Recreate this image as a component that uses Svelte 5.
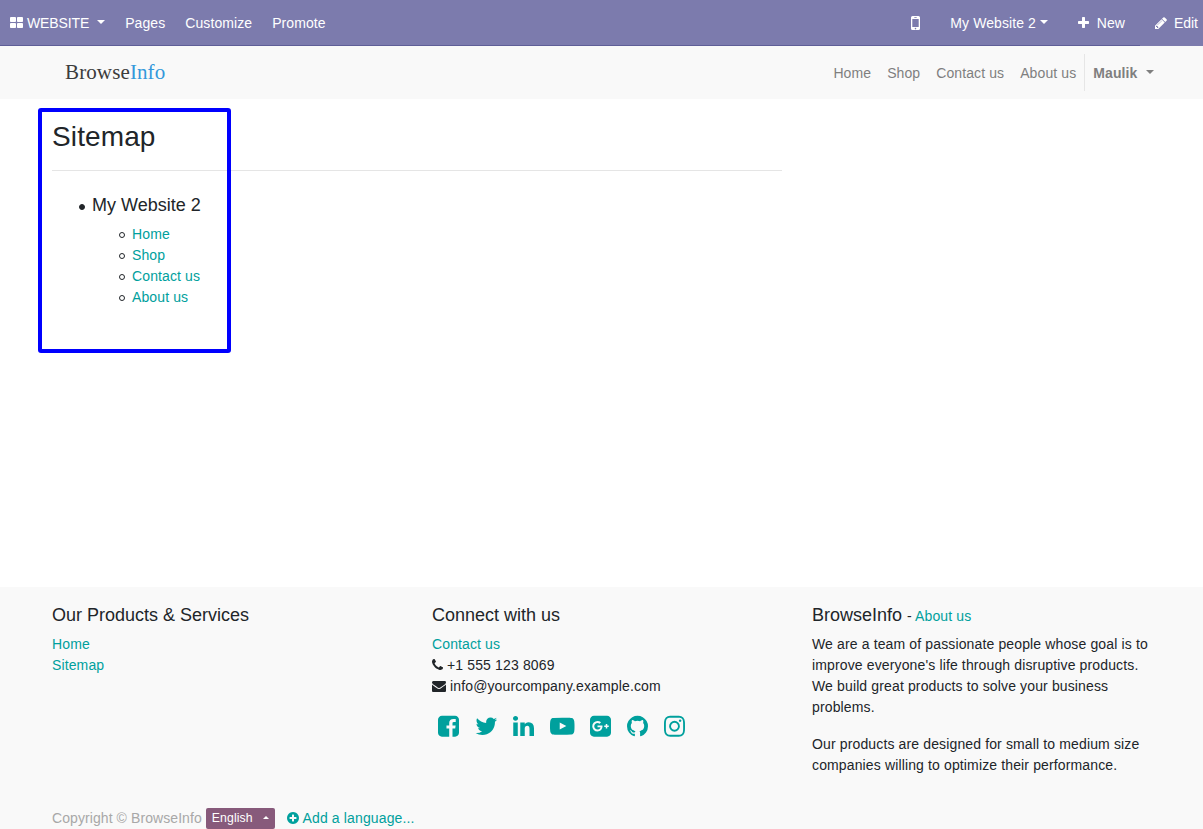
<script>
  const icons = {
    thLarge: { x: 64, w: 1664, d: 'M832 1024v384q0 52-38 90t-90 38h-512q-52 0-90-38t-38-90v-384q0-52 38-90t90-38h512q52 0 90 38t38 90zm0-768v384q0 52-38 90t-90 38h-512q-52 0-90-38t-38-90v-384q0-52 38-90t90-38h512q52 0 90 38t38 90zm896 768v384q0 52-38 90t-90 38h-512q-52 0-90-38t-38-90v-384q0-52 38-90t90-38h512q52 0 90 38t38 90zm0-768v384q0 52-38 90t-90 38h-512q-52 0-90-38t-38-90v-384q0-52 38-90t90-38h512q52 0 90 38t38 90z' },
    plus: { x: 192, w: 1408, d: 'M1600 736v192q0 40-28 68t-68 28h-416v416q0 40-28 68t-68 28h-192q-40 0-68-28t-28-68v-416h-416q-40 0-68-28t-28-68v-192q0-40 28-68t68-28h416v-416q0-40 28-68t68-28h192q40 0 68 28t28 68v416h416q40 0 68 28t28 68z' },
    pencil: { x: 128, w: 1536, d: 'M491 1536l91-91-235-235-91 91v107h128v128h107zm523-928q0-22-22-22-10 0-17 7l-542 542q-7 7-7 17 0 22 22 22 10 0 17-7l542-542q7-7 7-17zm-54-192l416 416-832 832h-416v-416zm683 96q0 53-37 90l-166 166-416-416 166-165q36-38 90-38 53 0 91 38l235 234q37 39 37 91z' },
    phone: { x: 192, w: 1408, d: 'M1600 1240q0 27-10 70.5t-21 68.5q-21 50-122 106-94 51-186 51-27 0-53-3.5t-57.5-12.5-47-14.5-55.5-20.5-49-18q-98-35-175-83-127-79-264-216t-216-264q-48-77-83-175-3-9-18-49t-20.5-55.5-14.5-47-12.5-57.5-3.5-53q0-92 51-186 56-101 106-122 25-11 68.5-21t70.5-10q14 0 21 3 18 6 53 76 11 19 30 54t35 63.5 31 53.5q3 4 17.5 25t21.5 35.5 7 28.5q0 20-28.5 50t-62 55-62 53-28.5 46q0 9 5 22.5t8.5 20.5 14 24 11.5 19q76 137 174 235t235 174q2 1 19 11.5t24 14 20.5 8.5 22.5 5q18 0 46-28.5t53-62 55-62 50-28.5q14 0 28.5 7t35.5 21.5 25 17.5q25 15 53.5 31t63.5 35 54 30q70 35 76 53 3 7 3 21z' },
    envelope: { x: 0, w: 1792, d: 'M1792 710v794q0 66-47 113t-113 47h-1472q-66 0-113-47t-47-113v-794q44 49 101 87 362 246 497 345 57 42 92.5 65.5t94.5 48 110 24.5h2q51 0 110-24.5t94.5-48 92.5-65.5q170-123 498-345 57-39 100-87zm0-294q0 79-49 151t-122 123q-376 261-468 325-10 7-42.5 31t-54 38.5-52 32.5-57.5 27-50 9h-2q-23 0-50-9t-57.5-27-52-32.5-54-38.5-42.5-31q-91-64-262-182.5t-205-142.5q-62-42-117-115.5t-55-136.5q0-78 41.5-130t118.5-52h1472q65 0 112.5 47t47.5 113z' },
    plusCircle: { x: 128, w: 1536, d: 'M1344 960v-128q0-26-19-45t-45-19h-256v-256q0-26-19-45t-45-19h-128q-26 0-45 19t-19 45v256h-256q-26 0-45 19t-19 45v128q0 26 19 45t45 19h256v256q0 26 19 45t45 19h128q26 0 45-19t19-45v-256h256q26 0 45-19t19-45zm320-64q0 209-103 385.5t-279.5 279.5-385.5 103-385.5-103-279.5-279.5-103-385.5 103-385.5 279.5-279.5 385.5-103 385.5 103 279.5 279.5 103 385.5z' },
    facebook: { x: 128, w: 1536, d: 'M1376 128q119 0 203.5 84.5t84.5 203.5v960q0 119-84.5 203.5t-203.5 84.5h-188v-595h199l30-232h-229v-148q0-56 23.5-84t91.5-28l122-1v-207q-63-9-178-9-136 0-217.5 80t-81.5 226v171h-200v232h200v595h-532q-119 0-203.5-84.5t-84.5-203.5v-960q0-119 84.5-203.5t203.5-84.5h960z' },
    twitter: { x: 64, w: 1664, d: 'M1684 408q-67 98-162 167 1 14 1 42 0 130-38 259.5t-115.5 248.5-184.5 210.5-258 146-323 54.5q-271 0-496-145 35 4 78 4 225 0 401-138-105-2-188-64.5t-114-159.5q33 5 61 5 43 0 85-11-112-23-185.5-111.5t-73.5-205.5v-4q68 38 146 41-66-44-105-115t-39-154q0-88 44-163 121 149 294.5 238.5t371.5 99.5q-8-38-8-74 0-134 94.5-228.5t228.5-94.5q140 0 236 102 109-21 205-78-37 115-142 178 93-10 186-50z' },
    linkedin: { x: 128, w: 1536, d: 'M477 625v991h-330v-991h330zm21-306q1 73-50.5 122t-135.5 49h-2q-82 0-132-49t-50-122q0-74 51.5-122.5t134.5-48.5 133 48.5 51 122.5zm1166 729v568h-329v-530q0-105-40.5-164.5t-126.5-59.5q-63 0-105.5 34.5t-63.5 85.5q-11 30-11 81v553h-329q2-399 2-647t-1-296l-1-48h329v144h-2q20-32 41-56t56.5-52 87-43.5 114.5-15.5q171 0 275 113.5t104 332.5z' },
    youtube: { x: 0, w: 1792, d: 'M711 1128l484-250-484-253v503zm185-862q168 0 324.5 4.5t229.5 9.5l73 4q1 0 17 1.5t23 3 23.5 4.5 28.5 8 28 13 31 19.5 29 26.5q6 6 15.5 18.5t29 58.5 26.5 101q8 64 12.5 136.5t5.5 113.5v176q1 145-18 290-7 55-25 99.5t-32 61.5l-14 17q-14 15-29 26.5t-31 19-28 12.5-28.5 8-24 4.5-23 3-16.5 1.5q-251 19-627 19-207-2-359.5-6.5t-200.5-7.5l-49-4-36-4q-36-5-54.5-10t-51-21-56.5-41q-6-6-15.5-18.5t-29-58.5-26.5-101q-8-64-12.5-136.5t-5.5-113.5v-176q-1-145 18-290 7-55 25-99.5t32-61.5l14-17q14-15 29-26.5t31-19.5 28-13 28.5-8 23.5-4.5 23-3 17-1.5q251-18 627-18z' },
    googlePlus: { x: 128, w: 1536, d: 'M1045 905q0-26-6-64h-362v132h217q-3 24-16.5 50t-37.5 53-66.5 44.5-96.5 17.5q-99 0-169-71t-70-171 70-171 169-71q92 0 153 59l104-101q-108-100-257-100-160 0-272 112.5t-112 271.5 112 271.5 272 112.5q165 0 266.5-105t101.5-270zm345 46h109v-110h-109v-110h-110v110h-110v110h110v110h110v-110zm274-535v960q0 119-84.5 203.5t-203.5 84.5h-960q-119 0-203.5-84.5t-84.5-203.5v-960q0-119 84.5-203.5t203.5-84.5h960q119 0 203.5 84.5t84.5 203.5z' },
    github: { x: 128, w: 1536, d: 'M896 128q209 0 385.5 103t279.5 279.5 103 385.5q0 251-146.5 451.5t-378.5 277.5q-27 5-40-7t-13-30q0-3 .5-76.5t.5-134.5q0-97-52-142 57-6 102.5-18t94-39 81-66.5 53-105 20.5-150.5q0-119-79-206 37-91-8-204-28-9-81 11t-92 44l-38 24q-93-26-192-26t-192 26q-16-11-42.5-27t-83.5-38.5-85-13.5q-45 113-8 204-79 87-79 206 0 85 20.5 150t52.5 105 80.5 67 94 39 102.5 18q-39 36-49 103-21 10-45 15t-57 5-65.5-21.5-55.5-62.5q-19-32-48.5-52t-49.5-24l-20-3q-21 0-29 4.5t-5 11.5 9 14 13 12l7 5q22 10 43.5 38t31.5 51l10 23q13 38 44 61.5t67 30 69.5 7 55.5-3.5l23-4q0 38 .5 88.5t.5 54.5q0 18-13 30t-40 7q-232-77-378.5-277.5t-146.5-451.5q0-209 103-385.5t279.5-279.5 385.5-103z' },
    instagram: { x: 128, w: 1536, d: 'M1152 896q0-106-75-181t-181-75-181 75-75 181 75 181 181 75 181-75 75-181zm138 0q0 164-115 279t-279 115-279-115-115-279 115-279 279-115 279 115 115 279zm108-410q0 38-27 65t-65 27-65-27-27-65 27-65 65-27 65 27 27 65zm-502-220q-7 0-76.5-.5t-105.5 0-96.5 3-103 10-71.5 18.5q-50 20-88 58t-58 88q-11 29-18.5 71.5t-10 103-3 96.5 0 105.5.5 76.5-.5 76.5 0 105.5 3 96.5 10 103 18.5 71.5q20 50 58 88t88 58q29 11 71.5 18.5t103 10 96.5 3 105.5 0 76.5-.5 76.5.5 105.5 0 96.5-3 103-10 71.5-18.5q50-20 88-58t58-88q11-29 18.5-71.5t10-103 3-96.5 0-105.5-.5-76.5.5-76.5 0-105.5-3-96.5-10-103-18.5-71.5q-20-50-58-88t-88-58q-29-11-71.5-18.5t-103-10-96.5-3-105.5 0-76.5.5zm768 630q0 229-5 317-10 208-124 322t-322 124q-88 5-317 5t-317-5q-208-10-322-124t-124-322q-5-88-5-317t5-317q10-208 124-322t322-124q88-5 317-5t317 5q208 10 322 124t124 322q5 88 5 317z' }
  };
  const pages = ['Home', 'Shop', 'Contact us', 'About us'];
  const social = ['facebook', 'twitter', 'linkedin', 'youtube', 'googlePlus', 'github', 'instagram'];
</script>

{#snippet icon(name, size = 14)}
  <svg class="icon" viewBox="{icons[name].x} 0 {icons[name].w} 1792" width={(icons[name].w / 1792) * size} height={size} aria-hidden="true"><path d={icons[name].d} /></svg>
{/snippet}

<div class="page">
  <nav class="topbar">
    <div class="tools">
      <a href="#top" class="brand">{@render icon('thLarge')}<span>WEBSITE</span><i class="caret"></i></a>
      <a href="#top">Pages</a>
      <a href="#top">Customize</a>
      <a href="#top">Promote</a>
    </div>
    <div class="actions">
      <a href="#top" class="mobile" aria-label="Mobile preview">
        <svg class="icon" viewBox="0 0 9 14" width="9" height="14" aria-hidden="true">
          <path fill-rule="evenodd" d="M1.5 0h6A1.5 1.5 0 0 1 9 1.5v11A1.5 1.5 0 0 1 7.500 14h-6A1.500 1.500 0 0 1 0 12.500v-11A1.500 1.500 0 0 1 1.500 0zM1.300 3v8h6.400V3zM3.300 1.300v.6h2.400v-.6zM4.500 11.800a.8.8 0 1 0 0 1.600.8.8 0 1 0 0-1.600z" />
        </svg>
      </a>
      <a href="#top" class="switch"><span>My Website 2</span><i class="caret"></i></a>
      <a href="#top" class="new">{@render icon('plus')}<span>New</span></a>
      <a href="#top" class="edit">{@render icon('pencil')}<span>Edit</span></a>
    </div>
  </nav>

  <header>
    <a href="#top" class="logo">Browse<span>Info</span></a>
    <div class="menu">
      {#each pages as p}<a href="#top">{p}</a>{/each}
      <a href="#top" class="user"><span>Maulik</span><i class="caret"></i></a>
    </div>
  </header>

  <main>
    <div class="highlight"></div>
    <h1>Sitemap</h1>
    <hr />
    <ul>
      <li class="site">
        <h4>My Website 2</h4>
        <ul>
          {#each pages as p}<li><a href="#top">{p}</a></li>{/each}
        </ul>
      </li>
    </ul>
  </main>

  <footer>
    <div class="columns">
      <section>
        <h4>Our Products &amp; Services</h4>
        <div><a href="#top">Home</a></div>
        <div><a href="#top">Sitemap</a></div>
      </section>
      <section>
        <h4>Connect with us</h4>
        <div><a href="#top">Contact us</a></div>
        <div class="contact phone">{@render icon('phone')}<span>+1 555 123 8069</span></div>
        <div class="contact">{@render icon('envelope')}<span>info@yourcompany.example.com</span></div>
        <div class="social">
          {#each social as s}<a href="#top" aria-label={s}>{@render icon(s, 24.5)}</a>{/each}
        </div>
      </section>
      <section>
        <h4>BrowseInfo <small>- <a href="#top">About us</a></small></h4>
        <p>We are a team of passionate people whose goal is to improve everyone's life through disruptive products. We build great products to solve your business problems.</p>
        <p>Our products are designed for small to medium size companies willing to optimize their performance.</p>
      </section>
    </div>
    <div class="legal">
      <span class="copy">Copyright © BrowseInfo</span>
      <button>English<i class="caret up"></i></button>
      <a href="#top" class="add">{@render icon('plusCircle')}<span>Add a language...</span></a>
    </div>
  </footer>
</div>

<style>
  :global(body) { margin: 0; overflow: hidden; }
  .page {
    display: flex;
    flex-direction: column;
    height: 829px;
    overflow: hidden;
    background: #fff;
    color: #212529;
    font: 14px/21px "Liberation Sans", Arial, sans-serif;
    letter-spacing: 0.12px;
  }
  a { color: #00a09d; text-decoration: none; }
  .icon { display: block; flex: none; fill: currentColor; }
  .caret {
    flex: none;
    width: 0;
    height: 0;
    margin-bottom: 2px;
    border: 4.2px solid transparent;
    border-top-color: currentColor;
    border-bottom: 0;
  }
  .caret.up { border: 3.6px solid transparent; border-bottom-color: currentColor; border-top: 0; }

  .topbar {
    display: flex;
    flex: none;
    justify-content: space-between;
    height: 46px;
    background: linear-gradient(#5f5e97, #5f5e97) 0 100% / 1140px 1px no-repeat #7c7bad;
    letter-spacing: 0.08px;
  }
  .topbar a { display: flex; align-items: center; color: #fff; white-space: nowrap; }
  .tools, .actions { display: flex; align-items: center; height: 46px; }
  .tools { gap: 20px; padding-left: 10px; }
  .brand { letter-spacing: -0.12px; }
  .brand .icon { margin-right: 4px; }
  .brand .caret { margin-left: 8px; }
  .actions { padding-right: 5px; }
  .switch { margin-left: 30px; }
  .switch .caret { margin-left: 4px; }
  .new { margin-left: 30px; letter-spacing: 0; }
  .new .icon { margin-right: 8px; }
  .edit { margin-left: 30px; letter-spacing: 0; }
  .edit .icon { margin-right: 7px; }

  header {
    display: flex;
    flex: none;
    align-items: center;
    justify-content: space-between;
    height: 53px;
    padding: 0 49px 0 65px;
    background: #f9f9f9;
  }
  .logo { padding-bottom: 2px; color: #3c3c3c; font: 21px/26px "Liberation Serif", serif; }
  .logo span { color: #3498db; }
  .menu { display: flex; align-items: center; letter-spacing: 0.1px; }
  .menu a { padding: 9px 8px 7px; color: #7f7f7f; }
  .menu .user { display: flex; align-items: center; border-left: 1px solid #e6e6e6; padding: 9px 0 7px 8px; font-weight: bold; }
  .user .caret { margin: 0 0 4px 8.6px; }

  main { position: relative; flex: none; box-sizing: border-box; width: 782px; height: 488px; padding: 21px 0 0 52px; }
  .highlight {
    position: absolute;
    left: 38px;
    top: 9px;
    box-sizing: border-box;
    width: 193px;
    height: 245px;
    border: 4px solid #00f;
    border-radius: 3px;
  }
  h1 { margin: 0; font-size: 28px; font-weight: 400; line-height: 34px; }
  hr { height: 1px; margin: 16px 0 23px; border: 0; background: #e5e5e5; }
  h4 { margin: 0 0 8px; font-size: 18px; font-weight: 400; line-height: 22px; letter-spacing: 0; }
  ul { margin: 0; padding-left: 40px; list-style: none; }
  .site > h4::before, .site li::before {
    content: "";
    display: inline-block;
    box-sizing: border-box;
    width: 6px;
    height: 6px;
    margin: 0 7px 0 -13px;
    border: 1px solid #212529;
    border-radius: 50%;
    vertical-align: 1px;
  }
  .site > h4::before { background: #212529; }

  footer { flex: 1; padding: 0 52px; background: #f9f9f9; }
  .columns { display: grid; grid-template-columns: repeat(3, 380px); height: 221px; padding-top: 17px; box-sizing: border-box; }
  p { width: 350px; margin: 0 0 16px; letter-spacing: 0.135px; }
  small { font-size: 14px; line-height: 14px; letter-spacing: 0.12px; }
  .contact { display: flex; align-items: center; gap: 4px; letter-spacing: 0.14px; }
  .contact .icon { margin-bottom: 1px; }
  .social { display: flex; align-items: center; gap: 15.8px; margin-top: 17px; padding-left: 6px; }
  .legal { display: flex; align-items: center; }
  .copy { color: #a8a8a8; letter-spacing: 0.08px; }
  button {
    display: flex;
    align-items: center;
    height: 21px;
    margin: 0 12px 0 4px;
    padding: 0 6px;
    border: 0;
    border-radius: 2px;
    background: #875a7b;
    color: #fff;
    font: 12.25px/21px "Liberation Sans", Arial, sans-serif;
    letter-spacing: 0.1px;
  }
  button .caret { margin-left: 9.8px; }
  .add { display: flex; align-items: center; gap: 4px; letter-spacing: 0.14px; }
  .add .icon { margin-bottom: 1px; }
</style>
